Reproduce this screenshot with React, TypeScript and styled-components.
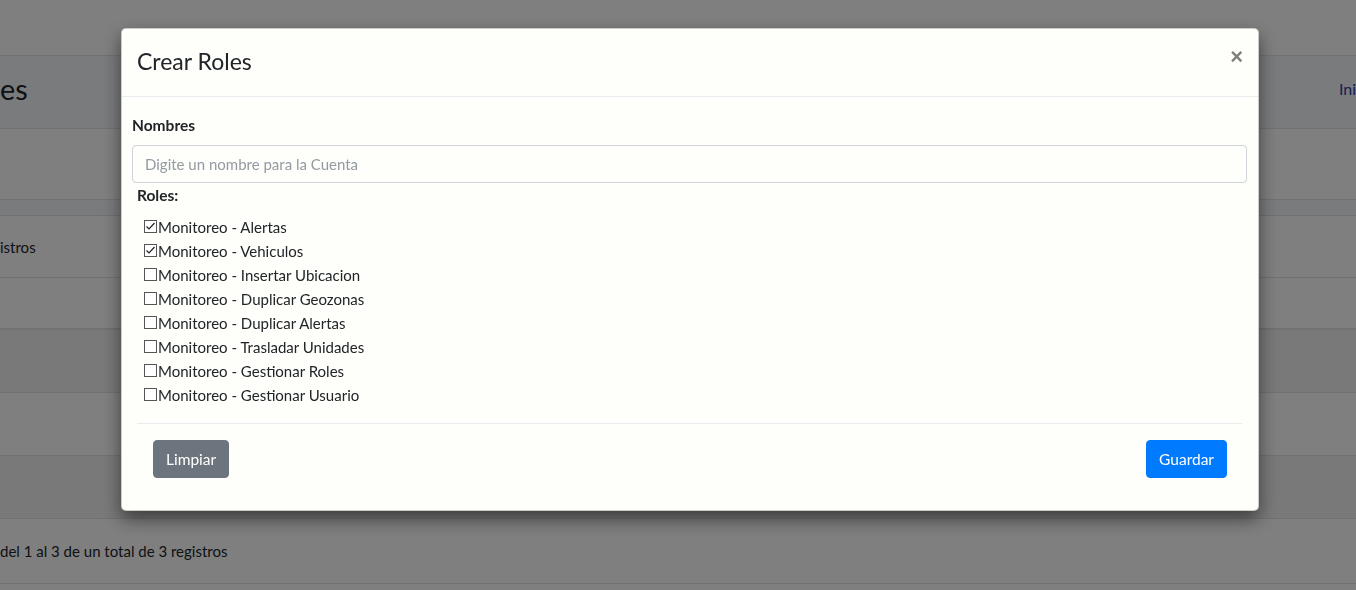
import React from "react";
import styled, { createGlobalStyle } from "styled-components";

const GlobalStyle = createGlobalStyle`
  html, body {
    margin: 0;
    padding: 0;
    width: 1356px;
    height: 590px;
    overflow: hidden;
    background: #ffffff;
    font-family: "Lato", "Liberation Sans", sans-serif;
    color: #212529;
  }
  * { box-sizing: border-box; }
`;

/* ---------- Background page ---------- */
const Page = styled.div`
  display: flex;
  flex-direction: column;
  width: 1356px;
  height: 590px;
  background: #ffffff;
`;

const Navbar = styled.div`
  height: 56px;
  background: #ffffff;
  border-bottom: 1px solid #dee2e6;
  flex-shrink: 0;
`;

const ContentHeader = styled.div`
  height: 73px;
  background: #f4f6f9;
  border-bottom: 1px solid #dee2e6;
  display: flex;
  align-items: center;
  justify-content: space-between;
  padding-bottom: 6px;
  flex-shrink: 0;
`;

const PageTitle = styled.h1`
  margin: 0;
  font-size: 28.8px;
  font-weight: 400;
  line-height: 1.2;
  color: #212529;
`;

const Breadcrumb = styled.a`
  font-size: 16px;
  color: #2f3aa8;
  width: 17px;
  overflow: hidden;
  white-space: nowrap;
  margin-top: -2px;
`;

const CardTop = styled.div`
  height: 71px;
  background: #ffffff;
  border-bottom: 1px solid #dee2e6;
  flex-shrink: 0;
`;

const Gap = styled.div`
  height: 16px;
  background: #f4f6f9;
  border-bottom: 1px solid #dee2e6;
  flex-shrink: 0;
`;

const InfoRow = styled.div<{ $h: number }>`
  height: ${(p) => p.$h}px;
  background: #ffffff;
  border-bottom: 1px solid #dee2e6;
  display: flex;
  align-items: center;
  font-size: 15px;
  flex-shrink: 0;
`;

const TableHead = styled.div`
  height: 52px;
  background: #ffffff;
  border-bottom: 2px solid #dee2e6;
  flex-shrink: 0;
`;

const TableRow = styled.div<{ $striped?: boolean }>`
  height: 63px;
  background: ${(p) => (p.$striped ? "#f2f2f2" : "#ffffff")};
  border-bottom: 1px solid #dee2e6;
  flex-shrink: 0;
`;

/* ---------- Modal ---------- */
const Backdrop = styled.div`
  position: fixed;
  inset: 0;
  background: rgba(0, 0, 0, 0.5);
  padding: 28px 0 0 121px;
`;

const ModalContent = styled.div`
  width: 1138px;
  background: #fefefa;
  border: 1px solid rgba(0, 0, 0, 0.2);
  border-radius: 5px;
  box-shadow: 0 8px 18px rgba(0, 0, 0, 0.5);
  display: flex;
  flex-direction: column;
`;

const ModalHeader = styled.div`
  display: flex;
  align-items: flex-start;
  justify-content: space-between;
  padding: 14px 16px 17px 15px;
  border-bottom: 1px solid #e9ecef;
`;

const ModalTitle = styled.h4`
  margin: 0;
  font-size: 23px;
  font-weight: 400;
  line-height: 36px;
  color: #212529;
`;

const CloseButton = styled.button`
  background: transparent;
  border: 0;
  padding: 0;
  margin: 1px -1px 0 0;
  font-family: "Liberation Sans", sans-serif;
  font-size: 22px;
  font-weight: 700;
  line-height: 26px;
  color: #000;
  opacity: 0.5;
  cursor: pointer;
`;

const ModalBody = styled.div`
  padding: 16px 11px 16px 10px;
  display: flex;
  flex-direction: column;
`;

const FieldLabel = styled.label`
  display: block;
  font-size: 15.5px;
  font-weight: 700;
  line-height: 24px;
  margin-bottom: 8px;
`;

const TextInput = styled.input`
  display: block;
  width: 100%;
  height: 38px;
  padding: 6px 12px;
  font-family: inherit;
  font-size: 15px;
  color: #495057;
  background: #fefefa;
  border: 1px solid #ced4da;
  border-radius: 4px;
  outline: none;
  &::placeholder {
    color: #939ba2;
  }
`;

const RolesSection = styled.div`
  padding: 0 5px;
  display: flex;
  flex-direction: column;
`;

const RolesLabel = styled.div`
  font-size: 15.5px;
  font-weight: 700;
  line-height: 24px;
  margin-bottom: 8px;
`;

const CheckList = styled.ul`
  list-style: none;
  margin: 0;
  padding: 0 0 0 7px;
`;

const CheckItem = styled.li`
  display: flex;
  align-items: center;
  height: 24px;
  font-size: 15px;
  color: #212529;
`;

const Box = styled.span`
  width: 13px;
  height: 13px;
  border: 1px solid #555;
  background: #fff;
  display: inline-flex;
  align-items: center;
  justify-content: center;
  margin-right: 1px;
  margin-top: -1px;
  flex-shrink: 0;
`;

const Divider = styled.hr`
  margin: 16px 0;
  border: 0;
  border-top: 1px solid #e9ecef;
`;

const Footer = styled.div`
  display: flex;
  justify-content: space-between;
  padding: 0 15px 16px 16px;
`;

const Button = styled.button<{ $variant: "secondary" | "primary" }>`
  height: 38px;
  padding: 0 12px;
  font-family: inherit;
  font-size: 15.5px;
  font-weight: 400;
  color: #fff;
  border: 1px solid ${(p) => (p.$variant === "primary" ? "#007bff" : "#6c757d")};
  background: ${(p) => (p.$variant === "primary" ? "#007bff" : "#6c757d")};
  border-radius: 4px;
  cursor: pointer;
`;

const roles = [
  { name: "Monitoreo - Alertas", checked: true },
  { name: "Monitoreo - Vehiculos", checked: true },
  { name: "Monitoreo - Insertar Ubicacion", checked: false },
  { name: "Monitoreo - Duplicar Geozonas", checked: false },
  { name: "Monitoreo - Duplicar Alertas", checked: false },
  { name: "Monitoreo - Trasladar Unidades", checked: false },
  { name: "Monitoreo - Gestionar Roles", checked: false },
  { name: "Monitoreo - Gestionar Usuario", checked: false },
];

const Check = () => (
  <svg width="11" height="11" viewBox="0 0 11 11" fill="none">
    <path d="M1.5 5.5 L4 8 L9.5 2" stroke="#222" strokeWidth="1.2" />
  </svg>
);

export default function App() {
  return (
    <>
      <GlobalStyle />
      <Page>
        <Navbar />
        <ContentHeader>
          <PageTitle>es</PageTitle>
          <Breadcrumb>Inicio</Breadcrumb>
        </ContentHeader>
        <CardTop />
        <Gap />
        <InfoRow $h={62}>istros</InfoRow>
        <TableHead />
        <TableRow $striped />
        <TableRow />
        <TableRow $striped />
        <InfoRow $h={65}>del 1 al 3 de un total de 3 registros</InfoRow>
      </Page>
      <Backdrop>
        <ModalContent>
          <ModalHeader>
            <ModalTitle>Crear Roles</ModalTitle>
            <CloseButton aria-label="Close">×</CloseButton>
          </ModalHeader>
          <ModalBody>
            <FieldLabel>Nombres</FieldLabel>
            <TextInput placeholder="Digite un nombre para la Cuenta" />
            <RolesSection>
              <RolesLabel>Roles:</RolesLabel>
              <CheckList>
                {roles.map((r) => (
                  <CheckItem key={r.name}>
                    <Box>{r.checked && <Check />}</Box>
                    {r.name}
                  </CheckItem>
                ))}
              </CheckList>
              <Divider />
              <Footer>
                <Button $variant="secondary">Limpiar</Button>
                <Button $variant="primary">Guardar</Button>
              </Footer>
            </RolesSection>
          </ModalBody>
        </ModalContent>
      </Backdrop>
    </>
  );
}
